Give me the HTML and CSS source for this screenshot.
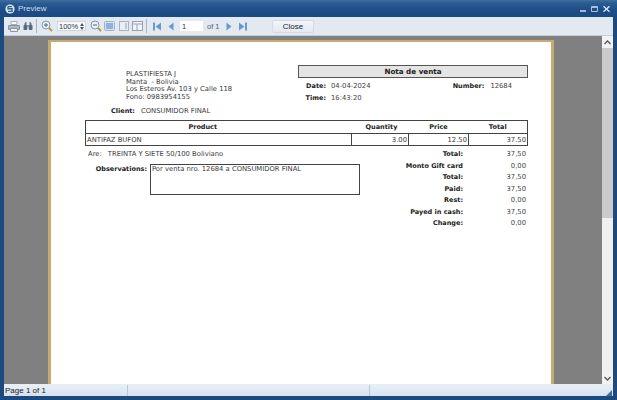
FILE: index.html
```html
<!DOCTYPE html>
<html lang="en">
<head>
<meta charset="utf-8">
<title>Preview</title>
<link rel="stylesheet" href="styles.css">
</head>
<body>
<div class="window">
  <header class="titlebar">
    <svg class="app-icon" width="10" height="10" viewBox="0 0 10 10"><circle cx="5" cy="5" r="4.600" fill="#dfe8f2"/><path d="M3 2.600h4M3 2.600v2.200h4v2.600H3" fill="none" stroke="#2a5f96" stroke-width="1.400"/></svg>
    <span class="title">Preview</span>
    <div class="win-controls">
      <svg width="6" height="6" viewBox="0 0 6 6"><path d="M0 5h6" stroke="#c6d6e8" stroke-width="1.600"/></svg>
      <svg width="7" height="6" viewBox="0 0 7 6"><path d="M.5.5h6v5h-6zM.5 1.500h6" fill="none" stroke="#a9c0da"/></svg>
      <svg width="7" height="6" viewBox="0 0 7 6"><path d="M.5.3l6 5.400M6.500.3l-6 5.400" stroke="#dbe6f2" stroke-width="1.400"/></svg>
    </div>
  </header>
  <nav class="toolbar">
    <svg class="tool print" width="12" height="11" viewBox="0 0 12 11"><path d="M3 .5h6v3H3z" fill="#fff" stroke="#a3adb8"/><path d="M.5 4.500h11v4H.5z" fill="#aeb8c3" stroke="#8a95a2"/><path d="M2.500 7.500h7v3h-7z" fill="#eef0f3" stroke="#8a95a2"/></svg>
    <svg class="tool find" width="10" height="10" viewBox="0 0 10 10"><path d="M1 3.500 2.500 1h1v3.500zM9 3.500 7.500 1h-1v3.500z" fill="#66758a"/><rect x=".5" y="4" width="3.800" height="5" rx="1" fill="#566880"/><rect x="5.700" y="4" width="3.800" height="5" rx="1" fill="#566880"/><path d="M4 4h2v2H4z" fill="#8c98a8"/></svg>
    <span class="sep sep-a"></span>
    <svg class="tool zoom-in" width="12" height="12" viewBox="0 0 12 12"><circle cx="5" cy="5" r="4" fill="#eaf1f8" stroke="#8496a9"/><path d="M3 5h4M5 3v4" stroke="#4b6a8a"/><path d="M8 8l3 3" stroke="#b59a45" stroke-width="2"/></svg>
    <div class="spin"><span class="spin-val">100%</span><span class="spin-arrows"><i class="up"></i><i class="down"></i></span></div>
    <svg class="tool zoom-out" width="12" height="12" viewBox="0 0 12 12"><circle cx="5" cy="5" r="4" fill="#eaf1f8" stroke="#8496a9"/><path d="M3 5h4" stroke="#4b6a8a"/><path d="M8 8l3 3" stroke="#b59a45" stroke-width="2"/></svg>
    <svg class="tool pg1" width="11" height="10" viewBox="0 0 11 10"><rect x=".5" y=".5" width="10" height="9" rx="1" fill="#d6e0ec" stroke="#a3b3c4"/><rect x="2" y="2" width="7" height="6" fill="#8fb2dc"/></svg>
    <svg class="tool pg2" width="10" height="10" viewBox="0 0 10 10"><rect x=".5" y=".5" width="9" height="9" fill="#e9eef4" stroke="#a6b3c1"/><rect x="6" y="2" width="2" height="6" fill="#bcc7d3"/></svg>
    <svg class="tool pg3" width="11" height="10" viewBox="0 0 11 10"><rect x=".5" y=".5" width="10" height="9" fill="#f2f5f8" stroke="#96a5b4"/><path d="M5 3v6.500M.5 3h10" stroke="#96a5b4" fill="none"/></svg>
    <span class="sep sep-b"></span>
    <svg class="tool first" width="8" height="9" viewBox="0 0 8 9"><path d="M0 .5h2v8H0zM8 .5v8L2.500 4.500z" fill="#6a98cc"/></svg>
    <svg class="tool prev" width="6" height="9" viewBox="0 0 6 9"><path d="M5.500 .5v8L.5 4.500z" fill="#6a98cc"/></svg>
    <input class="page-input" type="text" value="1" aria-label="Page">
    <span class="of">of 1</span>
    <svg class="tool next" width="6" height="9" viewBox="0 0 6 9"><path d="M.5 .5v8l5-4z" fill="#6a98cc"/></svg>
    <svg class="tool last" width="8" height="9" viewBox="0 0 8 9"><path d="M8 .5H6v8h2zM0 .5v8l5.500-4z" fill="#6a98cc"/></svg>
    <button class="close-btn" type="button">Close</button>
  </nav>
  <main class="viewport">
    <div class="canvas">
      <article class="page">
        <section class="head">
          <div class="company">
            <div>PLASTIFIESTA J</div>
            <div>Manta &nbsp;- Bolivia</div>
            <div>Los Esteros Av. 103 y Calle 118</div>
            <div>Fono: 0983954155</div>
          </div>
          <div class="doc">
            <div class="doc-title">Nota de venta</div>
            <div class="doc-row date-row"><b class="lbl-date">Date:</b><span>04-04-2024</span><b class="lbl-num">Number:</b><span>12684</span></div>
            <div class="doc-row time-row"><b class="lbl-date">Time:</b><span>16:43:20</span></div>
          </div>
        </section>
        <div class="client"><b>Client:</b><span>CONSUMIDOR FINAL</span></div>
        <table class="items">
          <thead><tr><th class="c-prod">Product</th><th class="c-qty">Quantity</th><th class="c-price">Price</th><th class="c-total">Total</th></tr></thead>
          <tbody><tr><td class="left">ANTIFAZ BUFON</td><td>3.00</td><td>12.50</td><td>37.50</td></tr></tbody>
        </table>
        <section class="foot">
          <div class="notes">
            <div class="are">Are:<span>TREINTA Y SIETE 50/100 Boliviano</span></div>
            <div class="obs"><b>Observations:</b><div class="obs-box">Por venta nro. 12684 a CONSUMIDOR FINAL</div></div>
          </div>
          <dl class="totals">
            <div class="r1"><dt>Total:</dt><dd>37,50</dd></div>
            <div class="r2"><dt>Monto Gift card</dt><dd>0,00</dd></div>
            <div><dt>Total:</dt><dd>37,50</dd></div>
            <div><dt>Paid:</dt><dd>37,50</dd></div>
            <div><dt>Rest:</dt><dd>0,00</dd></div>
            <div><dt>Payed in cash:</dt><dd>37,50</dd></div>
            <div><dt>Change:</dt><dd>0,00</dd></div>
          </dl>
        </section>
      </article>
    </div>
    <aside class="scrollbar">
      <span class="sb-btn"><svg width="7" height="5" viewBox="0 0 7 5"><path d="M.5 4L3.500 1l3 3" fill="none" stroke="#555" stroke-width="1.300"/></svg></span>
      <span class="sb-thumb"></span>
      <span class="sb-track"></span>
      <span class="sb-btn"><svg width="7" height="5" viewBox="0 0 7 5"><path d="M.5 1l3 3 3-3" fill="none" stroke="#555" stroke-width="1.300"/></svg></span>
    </aside>
  </main>
  <footer class="statusbar">
    <span class="st st1">Page 1 of 1</span>
    <span class="st st2"></span>
    <span class="st st3"><svg class="grip" width="6" height="6" viewBox="0 0 6 6"><path d="M6 0v6H0z" fill="#3f6c9e"/></svg></span>
  </footer>
</div>
</body>
</html>
```
FILE: styles.css
```css
* { box-sizing: border-box; }
html, body { margin: 0; padding: 0; }
body { width: 617px; height: 400px; overflow: hidden; font-family: "DejaVu Sans", Verdana, sans-serif; }
b, dt { font-size: 6.500px; }
.window {
  width: 617px; height: 400px; display: flex; flex-direction: column;
  background: #1c4a80; padding: 0 4px 4px;
}
.titlebar {
  height: 17px; margin: 0 -4px; padding: 0 7px 0 5px; display: flex; align-items: center; flex: none;
  background: linear-gradient(#3d709f 0, #2a5c92 3px, #1f4f88 9px, #1b4a82 17px);
  color: #d3deea; font: 8px "Liberation Sans", sans-serif;
}
.app-icon { flex: none; }
.title { margin-left: 3px; }
.win-controls { margin-left: auto; display: flex; gap: 5px; align-items: center; }
.toolbar {
  height: 19px; flex: none; display: flex; align-items: center; padding-left: 4px;
  background: #e2e9f1; border-bottom: 1px solid #c5ced8;
}
.tool { flex: none; display: block; }
.find { margin-left: 3px; }
.sep { flex: none; width: 1px; height: 14px; background: #aab5c0; }
.sep-a { margin-left: 3px; }
.zoom-in { margin-left: 4px; }
.spin {
  flex: none; margin-left: 4px; width: 29px; height: 10px; display: flex; align-items: center; justify-content: space-between;
  background: #f7f9fb; border: 1px solid #cdd6df; font: 7.500px "Liberation Sans", sans-serif; color: #333; padding-left: 1px;
}
.spin-arrows { display: flex; flex-direction: column; gap: 1px; width: 7px; align-items: center; }
.spin-arrows i { display: block; width: 0; height: 0; border-left: 2px solid transparent; border-right: 2px solid transparent; }
.spin-arrows .up { border-bottom: 3px solid #44566b; }
.spin-arrows .down { border-top: 3px solid #44566b; }
.zoom-out { margin-left: 4px; }
.pg1 { margin-left: 2px; }
.pg2 { margin-left: 4px; }
.pg3 { margin-left: 3px; }
.sep-b { margin-left: 3px; }
.first { margin-left: 6px; }
.prev { margin-left: 7px; }
.page-input {
  flex: none; margin-left: 6px; width: 23px; height: 10px; padding: 0 2px; border: 0; background: #fff;
  font: 7.500px "Liberation Sans", sans-serif; color: #333; outline: 0;
}
.of { flex: none; margin-left: 4px; width: 13px; white-space: nowrap; font: 7.500px "Liberation Sans", sans-serif; color: #55606c; }
.next { margin-left: 6px; }
.last { margin-left: 7px; }
.close-btn {
  flex: none; margin-left: 25px; width: 42px; height: 13px; padding: 0; border: 1px solid #d3dbe4; border-radius: 2px;
  background: linear-gradient(#f2f5f9, #e3e9f0); font: 8px "Liberation Sans", sans-serif; color: #222;
}
.viewport { flex: 1; min-height: 0; display: flex; background: #808080; }
.canvas { flex: 1; min-width: 0; padding: 4px 48px 0 44px; overflow: hidden; }
.page {
  height: 100%; background: #fff; border: solid #c8ab6a; border-width: 2px 3px 0;
  padding: 23px 23px 0 34px; font-size: 6.800px; line-height: 10px; color: #444;
}
.head { display: flex; justify-content: space-between; }
.company { padding: 6px 0 0 41px; line-height: 7.700px; color: #3a3a3a; }
.doc { width: 230px; }
.doc-title {
  height: 13px; line-height: 11px; text-align: center; font-weight: bold; font-size: 7.200px; color: #222;
  background: #e4e4e4; border: 1px solid #555;
}
.doc-row { display: flex; height: 12px; align-items: center; color: #444; }
.doc-row b { color: #222; }
.date-row { margin-top: 2px; }
.lbl-date { width: 28px; text-align: right; margin-right: 5px; }
.lbl-num { margin-left: auto; margin-right: 6px; }
.date-row span:last-child { margin-right: 16px; }
.client { margin-top: 2px; padding-left: 26px; height: 10px; display: flex; gap: 6px; color: #3a3a3a; }
.client b { color: #222; }
.items {
  margin-top: 4px; width: 442px; border-collapse: collapse; table-layout: fixed; border: 1px solid #444;
  font-size: 6.800px; color: #3a3a3a;
}
.items th { height: 13px; padding: 0; font-weight: bold; font-size: 6.500px; color: #222; border-bottom: 1px solid #444; }
.items td { height: 12px; padding: 0 1px; text-align: right; border-left: 1px solid #444; }
.items td.left { text-align: left; border-left: 0; }
.items .c-prod { width: 266px; padding-right: 32px; }
.items .c-qty { width: 57px; padding-left: 3px; }
.c-price { width: 60px; }
.c-total { width: 59px; }
.foot { display: flex; justify-content: space-between; }
.notes { width: 300px; }
.are { margin: 3px 0 0 3px; height: 10px; display: flex; gap: 6px; color: #3a3a3a; }
.obs { margin-top: 5px; display: flex; align-items: flex-start; }
.obs b { width: 62px; text-align: right; color: #222; margin-right: 3px; }
.obs-box { width: 210px; height: 31px; border: 1px solid #444; padding: 0 1px; line-height: 9px; color: #3a3a3a; }
.totals { width: 122px; margin: 2px 2px 0 0; }
.totals div { display: flex; justify-content: space-between; height: 11.400px; align-items: center; }
.totals .r1 { margin-bottom: 1px; }
.totals dt { width: 59px; text-align: right; font-weight: bold; color: #222; white-space: nowrap; }
.totals dd { margin: 0; color: #444; }
.scrollbar { width: 11px; flex: none; display: flex; flex-direction: column; background: #f0f0f0; }
.sb-btn { height: 12px; flex: none; display: flex; align-items: center; justify-content: center; background: #f2f2f2; }
.sb-thumb { height: 170px; flex: none; background: #cbcbcb; }
.sb-track { flex: 1; background: #f0f0f0; }
.statusbar {
  height: 12px; flex: none; display: flex; background: linear-gradient(#e9f0f6, #d5e2ed);
  border-top: 1px solid #e6edf3; font: 8px/11px "Liberation Sans", sans-serif; color: #222;
}
.st { display: block; padding-left: 1px; }
.st1 { width: 124px; border-right: 1px solid #b9c8d6; }
.st2 { width: 242px; border-right: 1px solid #b9c8d6; }
.st3 { flex: 1; display: flex; justify-content: flex-end; align-items: flex-end; padding-right: 1px; }
.grip { display: block; }
```
